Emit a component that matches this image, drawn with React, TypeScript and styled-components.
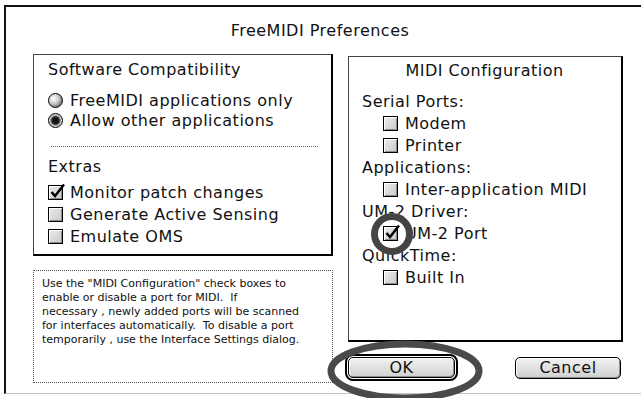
import styled, { createGlobalStyle } from "styled-components";

const GlobalStyle = createGlobalStyle`
  html, body {
    margin: 0;
    padding: 0;
    background: #fff;
  }
  body {
    width: 641px;
    height: 398px;
    overflow: hidden;
    font-family: "DejaVu Sans", "Liberation Sans", sans-serif;
    color: #111;
  }
`;

const Page = styled.div`
  position: relative;
  width: 641px;
  height: 398px;
  padding: 5px 0 0 4px;
  box-sizing: border-box;
`;

const Window = styled.div`
  height: 389px;
  box-sizing: border-box;
  border-top: 2px solid #111;
  border-left: 2px solid #111;
  border-bottom: 1px solid #c4c4c4;
`;

const Title = styled.div`
  height: 47px;
  display: flex;
  align-items: center;
  justify-content: center;
  padding-right: 7px;
  font-size: 16px;
  letter-spacing: 0.5px;
`;

const Columns = styled.div`
  display: grid;
  grid-template-columns: 300px 275px;
  column-gap: 15px;
  padding-left: 27px;
`;

const Column = styled.div<{ $top?: number }>`
  display: flex;
  flex-direction: column;
  padding-top: ${({ $top }) => $top ?? 0}px;
`;

const GroupBox = styled.div<{ $height: number; $padLeft: number; $padTop: number }>`
  height: ${({ $height }) => $height}px;
  box-sizing: border-box;
  border-top: 1px solid #444;
  border-left: 1px solid #444;
  border-right: 2px solid #000;
  border-bottom: 2px solid #000;
  padding: ${({ $padTop }) => $padTop}px 0 0 ${({ $padLeft }) => $padLeft}px;
  font-size: 16px;
  letter-spacing: 0.5px;
`;

const Heading = styled.div<{ $center?: boolean }>`
  height: 20px;
  line-height: 20px;
  text-align: ${({ $center }) => ($center ? "center" : "left")};
  padding-right: ${({ $center }) => ($center ? "14px" : "0")};
`;

const Stack = styled.div<{ $top: number }>`
  display: flex;
  flex-direction: column;
  margin-top: ${({ $top }) => $top}px;
`;

const Row = styled.div<{ $height: number; $indent?: number }>`
  display: flex;
  align-items: center;
  gap: 7px;
  height: ${({ $height }) => $height}px;
  padding-left: ${({ $indent }) => $indent ?? 0}px;
  white-space: nowrap;
`;

const Separator = styled.div`
  margin: 16px 13px 0 3px;
  border-top: 1px dotted #666;
`;

const Box = styled.span`
  position: relative;
  width: 15px;
  height: 15px;
  flex: none;
  box-sizing: border-box;
  border: 1px solid #000;
  background: linear-gradient(135deg, #ececec, #c9c9c9);
  box-shadow: inset 1px 1px #fff, inset -1px -1px #8a8a8a;
`;

const Tick = styled.svg`
  position: absolute;
  left: 0;
  top: -3px;
  width: 17px;
  height: 17px;
  overflow: visible;
`;

const Radio = styled.span<{ $on?: boolean }>`
  width: 15px;
  height: 15px;
  flex: none;
  box-sizing: border-box;
  border-radius: 50%;
  border: 1px solid #000;
  background: ${({ $on }) =>
    $on
      ? "radial-gradient(circle at 50% 50%, #000 0, #222 3.5px, #777 4.5px, #ddd 6px, #aaa 7px)"
      : "radial-gradient(circle at 35% 35%, #fff 0, #e4e4e4 3px, #bcbcbc 6px, #888 8px)"};
`;

const NoteBox = styled.div`
  margin-top: 14px;
  height: 113px;
  box-sizing: border-box;
  border: 1px dotted #555;
  padding: 6px 0 0 8px;
  font-size: 11px;
  line-height: 14px;
  white-space: pre;
`;

const ButtonRow = styled.div`
  display: flex;
  align-items: center;
  justify-content: space-between;
  margin: 12px 2px 0 -3px;
`;

const DefaultRing = styled.span`
  display: flex;
  padding: 1px;
  border: 2px solid #000;
  border-radius: 8px;
`;

const PushButton = styled.button<{ $width: number; $height: number }>`
  width: ${({ $width }) => $width}px;
  height: ${({ $height }) => $height}px;
  padding: 0;
  border: 1px solid #000;
  border-radius: 5px;
  background: linear-gradient(#f2f2f2, #d0d0d0);
  box-shadow: inset 1px 1px #fff, inset -1px -1px #8c8c8c;
  font-family: "DejaVu Sans", "Liberation Sans", sans-serif;
  font-size: 16px;
  letter-spacing: 0.5px;
  color: #111;
`;

const Marks = styled.svg`
  position: absolute;
  left: 0;
  top: 0;
  pointer-events: none;
`;

const CheckBox = ({ checked }: { checked?: boolean }) => (
  <Box>
    {checked && (
      <Tick viewBox="0 0 17 17">
        <path d="M2.5 9 L6 13 L15 1.5" fill="none" stroke="#000" strokeWidth="2.4" strokeLinejoin="miter" />
      </Tick>
    )}
  </Box>
);

const Option = ({ label, checked, indent, height = 22 }: { label: string; checked?: boolean; indent?: number; height?: number }) => (
  <Row $height={height} $indent={indent}>
    <CheckBox checked={checked} />
    <span>{label}</span>
  </Row>
);

const note = [
  'Use the "MIDI Configuration" check boxes to',
  "enable or disable a port for MIDI.  If",
  "necessary , newly added ports will be scanned",
  "for interfaces automatically.  To disable a port",
  "temporarily , use the Interface Settings dialog.",
].join("\n");

export default function App() {
  return (
    <>
      <GlobalStyle />
      <Page>
        <Window>
          <Title>FreeMIDI Preferences</Title>
          <Columns>
            <Column>
              <GroupBox $height={202} $padLeft={14} $padTop={5}>
                <Heading>Software Compatibility</Heading>
                <Stack $top={10}>
                  <Row $height={20}>
                    <Radio />
                    <span>FreeMIDI applications only</span>
                  </Row>
                  <Row $height={20}>
                    <Radio $on />
                    <span>Allow other applications</span>
                  </Row>
                </Stack>
                <Separator />
                <Stack $top={10}>
                  <Heading>Extras</Heading>
                </Stack>
                <Stack $top={4}>
                  <Option label="Monitor patch changes" checked />
                  <Option label="Generate Active Sensing" />
                  <Option label="Emulate OMS" />
                </Stack>
              </GroupBox>
              <NoteBox>{note}</NoteBox>
            </Column>
            <Column $top={2}>
              <GroupBox $height={286} $padLeft={13} $padTop={4}>
                <Heading $center>MIDI Configuration</Heading>
                <Stack $top={9}>
                  <Row $height={22}>Serial Ports:</Row>
                  <Option label="Modem" indent={21} />
                  <Option label="Printer" indent={21} />
                  <Row $height={22}>Applications:</Row>
                  <Option label="Inter-application MIDI" indent={21} />
                  <Row $height={22}>UM-2 Driver:</Row>
                  <Option label="UM-2 Port" indent={21} checked />
                  <Row $height={22}>QuickTime:</Row>
                  <Option label="Built In" indent={21} />
                </Stack>
              </GroupBox>
              <ButtonRow>
                <DefaultRing>
                  <PushButton $width={107} $height={21}>OK</PushButton>
                </DefaultRing>
                <PushButton $width={106} $height={22}>Cancel</PushButton>
              </ButtonRow>
            </Column>
          </Columns>
        </Window>
        <Marks width="641" height="398" viewBox="0 0 641 398">
          <circle cx="392" cy="234" r="17.5" fill="none" stroke="#444" strokeWidth="7" />
          <ellipse cx="405" cy="371" rx="74" ry="27" fill="none" stroke="#4a4a4a" strokeWidth="7" />
        </Marks>
      </Page>
    </>
  );
}
